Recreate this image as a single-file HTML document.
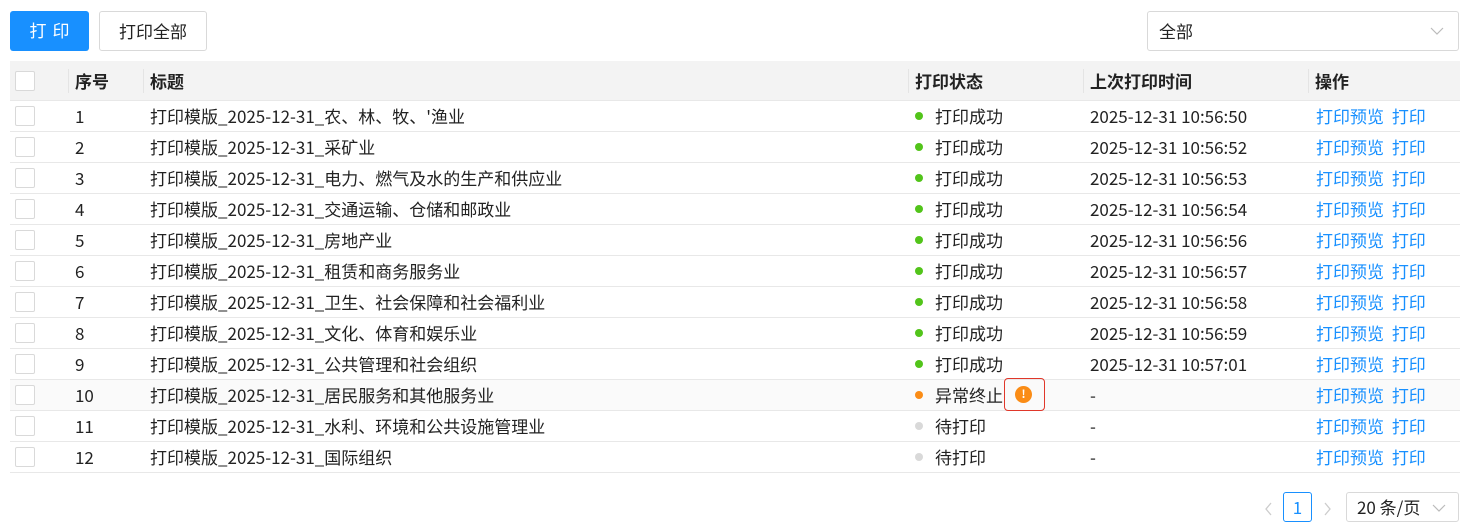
<!DOCTYPE html>
<html><head><meta charset="utf-8"><style>
*{box-sizing:border-box;margin:0;padding:0}
body{width:1477px;height:532px;background:#fff;font-family:"Noto Sans CJK SC","Liberation Sans",sans-serif;font-size:17px;color:#222;position:relative;overflow:hidden}
.abs{position:absolute}
.btn{position:absolute;top:11px;height:40px;border-radius:3px;line-height:38px;text-align:center;font-size:17px}
.tbl{position:absolute;left:10px;top:61px;width:1450px}
.row{position:relative;height:31px;border-bottom:1px solid #e8e8e8}
.hdr{height:40px;background:#f3f3f3;font-weight:bold;border-bottom:1px solid #e8e8e8}
.c{position:absolute;top:0;height:100%;line-height:30px;white-space:nowrap}
.hdr .c{line-height:40px}
.cb{width:20px;height:20px;border:1px solid #d9d9d9;border-radius:2px;background:#fff;left:5px;top:50%;margin-top:-10px;position:absolute}
.dot{width:8px;height:8px;border-radius:50%;display:inline-block;margin-right:12px;vertical-align:middle;position:relative;top:-2px}
.lnk{color:#1890ff}
.sep{position:absolute;top:8px;height:24px;width:1px;background:#e4e4e4}
</style></head><body>
<div class="btn" style="left:10px;width:79px;background:#1890ff;color:#fff;letter-spacing:6px;padding-left:6px">打印</div>
<div class="btn" style="left:99px;width:108px;border:1px solid #d9d9d9;">打印全部</div>
<div class="btn" style="left:1147px;width:312px;border:1px solid #d9d9d9;text-align:left;padding-left:11px">全部
<svg class="abs" style="right:14px;top:14px" width="14" height="10" viewBox="0 0 14 10"><path d="M1 2l6 6 6-6" fill="none" stroke="#bbb" stroke-width="1.2"/></svg></div>
<div class="tbl">
<div class="row hdr"><div class="cb"></div>
<div class="sep" style="left:58px"></div><div class="sep" style="left:133px"></div><div class="sep" style="left:898px"></div><div class="sep" style="left:1073px"></div><div class="sep" style="left:1298px"></div>
<div class="c" style="left:65px">序号</div><div class="c" style="left:140px">标题</div><div class="c" style="left:905px">打印状态</div><div class="c" style="left:1080px">上次打印时间</div><div class="c" style="left:1305px">操作</div></div>
<div id="rows"></div>
</div>
<svg class="abs" style="left:1263px;top:501px" width="10" height="16" viewBox="0 0 10 16"><path d="M8 2L3 8l5 6" fill="none" stroke="#ccc" stroke-width="1.3"/></svg>
<div class="abs" style="left:1283px;top:492px;width:29px;height:30px;border:1px solid #1890ff;border-radius:3px;color:#1890ff;line-height:28px;text-align:center">1</div>
<svg class="abs" style="left:1323px;top:501px" width="10" height="16" viewBox="0 0 10 16"><path d="M2 2l5 6-5 6" fill="none" stroke="#ccc" stroke-width="1.3"/></svg>
<div class="abs" style="left:1346px;top:492px;width:113px;height:30px;border:1px solid #d9d9d9;border-radius:3px;line-height:28px;padding-left:10px">20 条/页
<svg class="abs" style="right:12px;top:10px" width="14" height="10" viewBox="0 0 14 10"><path d="M1 2l6 6 6-6" fill="none" stroke="#bbb" stroke-width="1.2"/></svg></div>
<script>
var t=["农、林、牧、'渔业","采矿业","电力、燃气及水的生产和供应业","交通运输、仓储和邮政业","房地产业","租赁和商务服务业","卫生、社会保障和社会福利业","文化、体育和娱乐业","公共管理和社会组织","居民服务和其他服务业","水利、环境和公共设施管理业","国际组织"];
var tm=["50","52","53","54","56","57","58","59"];
var h="";
for(var i=0;i<12;i++){
var st,time;
if(i<9){st='<span class="dot" style="background:#52c41a"></span>打印成功';time='2025-12-31 10:'+(i<8?'56:'+tm[i]:'57:01');}
else if(i==9){st='<span class="dot" style="background:#fa8c16"></span>异常终止<span style="position:absolute;left:89px;top:-2px;width:41px;height:33px;border:1.5px solid #e0372a;border-radius:4px"><span style="position:absolute;left:10px;top:7px;width:17px;height:17px;border-radius:50%;background:#fa8c16;color:#fff;font-size:11px;font-weight:bold;line-height:17px;text-align:center">!</span></span>';time='-';}
else{st='<span class="dot" style="background:#d9d9d9"></span>待打印';time='-';}
h+='<div class="row" style="'+(i==9?'background:#fafafa':'')+'"><div class="cb"></div><div class="c" style="left:65px">'+(i+1)+'</div><div class="c" style="left:140px">打印模版_2025-12-31_'+t[i]+'</div><div class="c" style="left:905px">'+st+'</div><div class="c" style="left:1080px">'+time+'</div><div class="c lnk" style="left:1306px">打印预览 <span style="margin-left:4px">打印</span></div></div>';
}
document.getElementById('rows').innerHTML=h;
</script>
</body></html>
